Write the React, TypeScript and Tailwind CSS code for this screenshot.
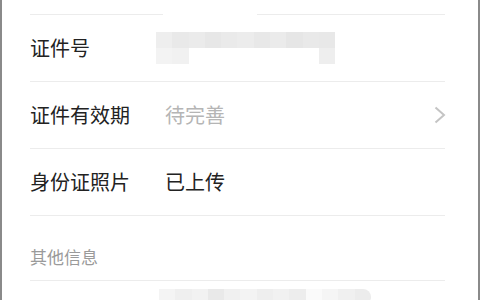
const font = { fontFamily: '"Noto Sans CJK SC", "Noto Sans", sans-serif' };

const topCells = [
  "bg-[#eeeeee]", "bg-[#e9e9e9]", "bg-[#ebebeb]", "bg-[#e7e7e7]", "bg-[#eaeaea]", "bg-[#ececec]",
  "bg-[#e8e8e8]", "bg-[#ebebeb]", "bg-[#e6e6e6]", "bg-[#e9e9e9]", "bg-[#e8e8e8]",
];
const bottomCells = [
  "bg-[#f3f3f3]", "bg-[#f1f1f1]", "bg-white", "bg-white", "bg-white", "bg-white",
  "bg-white", "bg-white", "bg-white", "bg-white", "bg-[#eeeeee]",
];
const lastCells = [
  "bg-[#f4f4f4]", "bg-[#efefef]", "bg-[#f2f2f2]", "bg-[#e9e9e9]", "bg-[#f0f0f0]", "bg-[#f3f3f3]",
  "bg-[#eeeeee]", "bg-[#f1f1f1]", "bg-[#ededed]", "bg-[#fafafa]", "bg-[#f5f5f5]", "bg-[#f0f0f0]",
  "bg-[#ececec]",
];

const Chevron = () => (
  <svg width="12" height="18" viewBox="0 0 12 18" fill="none" className="-mr-px">
    <path d="M1.5 1.5L10 9L1.5 16.5" stroke="#c4c4c4" strokeWidth="2" />
  </svg>
);

const Row = ({ label, children }: { label: string; children?: React.ReactNode }) => (
  <div className="flex h-[67px] items-center border-b border-[#ececec]">
    <div className="w-[135px] shrink-0 text-[20px] text-[#222222]">{label}</div>
    {children}
  </div>
);

export default function App() {
  return (
    <div
      className="h-[300px] w-[480px] overflow-hidden border-x-2 border-[#8a8a8a] bg-white"
      style={font}
    >
      <div className="ml-[28px] mr-[33px]">
        <div className="flex h-[15px]">
          <div className="w-[133px] border-b border-[#ececec]" />
          <div className="w-[94px] bg-white" />
          <div className="flex-1 border-b border-[#ececec]" />
        </div>

        <Row label="证件号">
          <div className="-ml-[9px] flex flex-col">
            <div className="flex">
              {topCells.map((c, i) => (
                <div key={i} className={`h-[16px] w-[16.3px] ${c}`} />
              ))}
            </div>
            <div className="flex">
              {bottomCells.map((c, i) => (
                <div key={i} className={`h-[16px] w-[16.3px] ${c}`} />
              ))}
            </div>
          </div>
        </Row>

        <Row label="证件有效期">
          <div className="flex-1 text-[20px] text-[#b5b5b5]">待完善</div>
          <Chevron />
        </Row>

        <Row label="身份证照片">
          <div className="text-[20px] text-[#222222]">已上传</div>
        </Row>

        <div className="flex h-[65px] items-end border-b border-[#ececec] pb-[11px]">
          <span className="text-[17px] text-[#9a9a9a]">其他信息</span>
        </div>

        <div className="flex pt-[8px]">
          <div className="w-[129px] shrink-0" />
          <div className="flex overflow-hidden rounded-r-[8px]">
            {lastCells.map((c, i) => (
              <div key={i} className={`h-[16px] w-[16.3px] ${c}`} />
            ))}
          </div>
        </div>
      </div>
    </div>
  );
}
